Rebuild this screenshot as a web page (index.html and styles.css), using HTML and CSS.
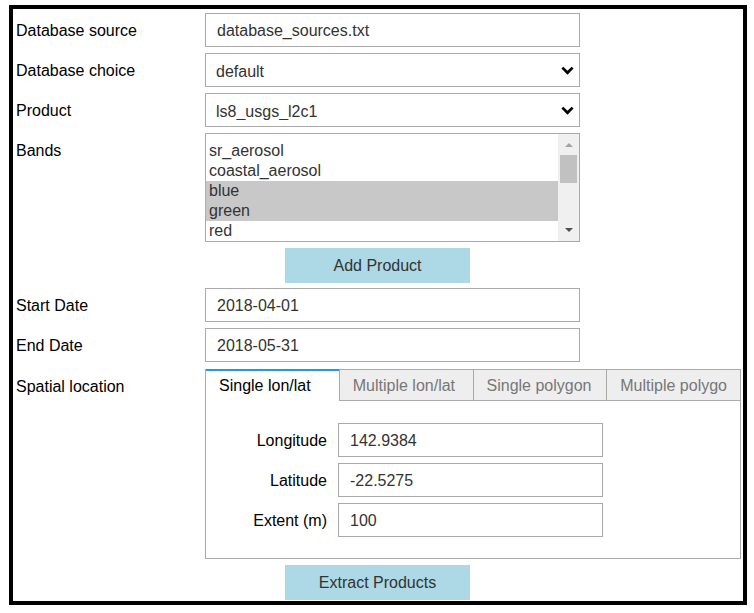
FILE: index.html
```html
<!DOCTYPE html>
<html lang="en">
<head>
<meta charset="utf-8">
<title>Product extraction</title>
<link rel="stylesheet" href="styles.css">
</head>
<body>
<div class="frame">
  <div class="form">
    <div class="row">
      <div class="label">Database source</div>
      <div class="field"><input class="text-input" type="text" value="database_sources.txt"></div>
    </div>
    <div class="row">
      <div class="label">Database choice</div>
      <div class="field">
        <div class="select-wrap">
          <select class="select"><option>default</option></select>
          <svg class="chevron" width="13" height="9" viewBox="0 0 13 9"><path d="M1.4 1.6 L6.5 6.8 L11.6 1.6" fill="none" stroke="#000" stroke-width="2.7"/></svg>
        </div>
      </div>
    </div>
    <div class="row">
      <div class="label">Product</div>
      <div class="field">
        <div class="select-wrap">
          <select class="select"><option>ls8_usgs_l2c1</option></select>
          <svg class="chevron" width="13" height="9" viewBox="0 0 13 9"><path d="M1.4 1.6 L6.5 6.8 L11.6 1.6" fill="none" stroke="#000" stroke-width="2.7"/></svg>
        </div>
      </div>
    </div>
    <div class="row">
      <div class="label">Bands</div>
      <div class="field">
        <div class="listbox">
          <div class="options">
            <div class="option">sr_aerosol</div>
            <div class="option">coastal_aerosol</div>
            <div class="option selected">blue</div>
            <div class="option selected">green</div>
            <div class="option">red</div>
          </div>
          <div class="scrollbar">
            <div class="sb-btn"><span class="tri-up"></span></div>
            <div class="sb-track"><div class="sb-thumb"></div></div>
            <div class="sb-btn"><span class="tri-down"></span></div>
          </div>
        </div>
      </div>
    </div>
    <div class="button-row first-btn"><button class="action">Add Product</button></div>
    <div class="row">
      <div class="label">Start Date</div>
      <div class="field"><input class="text-input" type="text" value="2018-04-01"></div>
    </div>
    <div class="row gap7">
      <div class="label">End Date</div>
      <div class="field"><input class="text-input" type="text" value="2018-05-31"></div>
    </div>
    <div class="row">
      <div class="label">Spatial location</div>
      <div class="field">
        <div class="tabbox">
          <div class="tabs">
            <div class="tab active">Single lon/lat</div>
            <div class="tab">Multiple lon/lat</div>
            <div class="tab">Single polygon</div>
            <div class="tab">Multiple polygo</div>
          </div>
          <div class="panel">
            <div class="plabel">Longitude</div>
            <input class="text-input small" type="text" value="142.9384">
            <div class="plabel">Latitude</div>
            <input class="text-input small" type="text" value="-22.5275">
            <div class="plabel">Extent (m)</div>
            <input class="text-input small" type="text" value="100">
          </div>
        </div>
      </div>
    </div>
    <div class="button-row"><button class="action">Extract Products</button></div>
  </div>
</div>
</body>
</html>
```
FILE: styles.css
```css
html, body {
  margin: 0;
  padding: 0;
  background: #fff;
}
body {
  font-family: "Liberation Sans", Arial, sans-serif;
  font-size: 16px;
  color: #000;
}
.frame {
  box-sizing: border-box;
  width: 738px;
  height: 600px;
  margin: 5px 0 0 9px;
  border: 4px solid #000;
  overflow: hidden;
}
.form {
  padding-top: 4px;
}
.row {
  display: flex;
  padding-left: 3px;
  margin-bottom: 6px;
}
.row.gap7 {
  margin-bottom: 7px;
}
.label {
  box-sizing: border-box;
  width: 189px;
  flex: none;
  height: 34px;
  padding-top: 1px;
  line-height: 34px;
  color: #000;
}
.field {
  width: 536px;
  flex: none;
}
.text-input,
.select {
  display: block;
  box-sizing: border-box;
  width: 375px;
  height: 34px;
  margin: 0;
  padding: 2px 11px 0;
  border: 1px solid #aaa;
  border-radius: 0;
  background: #fff;
  font-family: "Liberation Sans", Arial, sans-serif;
  font-size: 16px;
  color: #333;
  outline: none;
}
.select {
  -webkit-appearance: none;
  appearance: none;
  padding-left: 10px;
}
.select-wrap {
  position: relative;
  width: 375px;
}
.chevron {
  position: absolute;
  right: 6px;
  top: 13px;
  pointer-events: none;
}
.listbox {
  display: flex;
  box-sizing: border-box;
  width: 375px;
  height: 109px;
  border: 1px solid #aaa;
  background: #fff;
}
.options {
  flex: 1;
  padding-top: 7px;
  overflow: hidden;
}
.option {
  height: 20px;
  line-height: 20px;
  padding-left: 3px;
  color: #333;
  white-space: nowrap;
}
.option.selected {
  background: #c8c8c8;
}
.scrollbar {
  width: 21px;
  flex: none;
  display: flex;
  flex-direction: column;
  background: #f0f0f0;
}
.sb-btn {
  height: 21px;
  flex: none;
  display: flex;
  align-items: center;
  justify-content: center;
}
.tri-up {
  width: 0;
  height: 0;
  border-left: 4.5px solid transparent;
  border-right: 4.5px solid transparent;
  border-bottom: 4px solid #a3a3a3;
}
.tri-down {
  width: 0;
  height: 0;
  border-left: 4.5px solid transparent;
  border-right: 4.5px solid transparent;
  border-top: 4px solid #505050;
  margin-top: -2px;
}
.sb-track {
  flex: 1;
}
.sb-thumb {
  height: 28px;
  margin: 0 2px;
  background: #c1c1c1;
}
.button-row {
  display: flex;
  justify-content: center;
  margin-bottom: 5px;
  padding-right: 1px;
}
.action {
  width: 185px;
  height: 35px;
  margin: 0;
  padding: 0;
  border: none;
  border-radius: 0;
  background: #add8e6;
  font-family: "Liberation Sans", Arial, sans-serif;
  font-size: 16px;
  color: #333;
}
.tabbox {
  box-sizing: border-box;
  width: 536px;
  border-left: 1px solid #aaa;
  border-right: 1px solid #aaa;
  border-bottom: 1px solid #aaa;
}
.tabs {
  display: flex;
  height: 32px;
}
.tab {
  flex: 1;
  min-width: 0;
  box-sizing: border-box;
  display: flex;
  align-items: center;
  padding: 1px 0 0 13px;
  border-top: 1px solid #aaa;
  border-bottom: 1px solid #aaa;
  border-left: 1px solid #aaa;
  background: #eee;
  color: #777;
  white-space: nowrap;
  overflow: hidden;
}
.tab.active {
  border-left: none;
  border-top: 2px solid #2196f3;
  border-bottom: 1px solid #fff;
  background: #fff;
  color: #000;
}
.panel {
  display: grid;
  grid-template-columns: 121px 265px;
  column-gap: 11px;
  row-gap: 6px;
  padding: 22px 0 21px;
}
.plabel {
  box-sizing: border-box;
  height: 34px;
  padding-top: 1px;
  line-height: 34px;
  text-align: right;
  color: #000;
}
.text-input.small {
  width: 265px;
}
```
